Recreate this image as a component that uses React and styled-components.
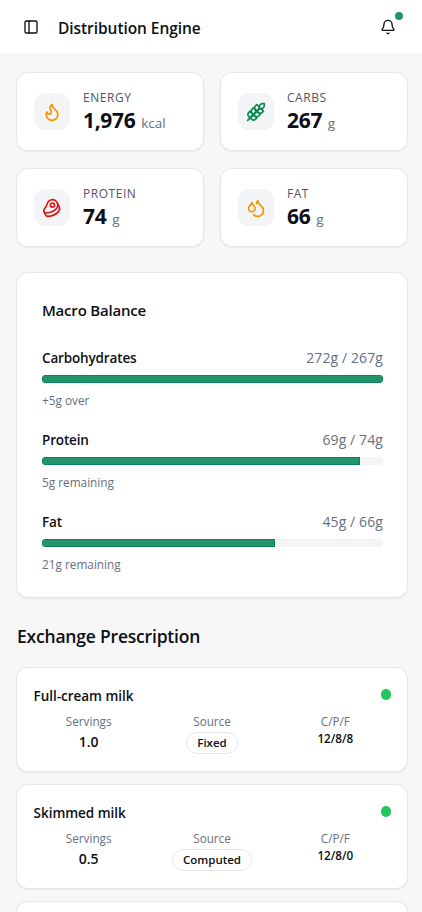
import React from "react";
import styled, { createGlobalStyle } from "styled-components";
import { PanelLeft, Bell, Flame, Wheat, Beef, Droplets } from "lucide-react";

const stats = [
  { label: "Energy", value: "1,976", unit: "kcal", color: "#f59300", icon: Flame },
  { label: "Carbs", value: "267", unit: "g", color: "#0b8a55", icon: Wheat },
  { label: "Protein", value: "74", unit: "g", color: "#dc1414", icon: Beef },
  { label: "Fat", value: "66", unit: "g", color: "#f59300", icon: Droplets },
];

const macros = [
  { name: "Carbohydrates", current: 272, target: 267 },
  { name: "Protein", current: 69, target: 74 },
  { name: "Fat", current: 45, target: 66 },
];

const exchanges = [
  { name: "Full-cream milk", servings: "1.0", source: "Fixed", cpf: "12/8/8" },
  { name: "Skimmed milk", servings: "0.5", source: "Computed", cpf: "12/8/0" },
];

const GlobalStyle = createGlobalStyle`
  * {
    box-sizing: border-box;
  }
  body {
    margin: 0;
    background-color: #f7f7f7;
    color: #0c0f16;
    font-family: "Open Sans", "Noto Sans", sans-serif;
  }
  h1, h2, h3, p {
    margin: 0;
  }
`;
const Page = styled.div`
  display: flex;
  flex-direction: column;
  height: 912px;
  overflow: hidden;
`;
const Header = styled.header`
  display: flex;
  flex-shrink: 0;
  align-items: center;
  height: 55px;
  padding: 0 26px 0 23px;
  background-color: white;
  border-bottom: 1px solid #f0f0f1;
`;
const PageTitle = styled.h1`
  flex: 1;
  margin-left: 19px;
  padding-top: 1px;
  font-size: 15.5px;
  font-weight: 600;
  line-height: 24px;
  letter-spacing: -0.06px;
`;
const BellButton = styled.div`
  position: relative;
  display: flex;
`;
const BellDot = styled.span`
  position: absolute;
  top: -7px;
  right: -7px;
  width: 8px;
  height: 8px;
  border-radius: 50%;
  background-color: #23936b;
`;
const Main = styled.main`
  display: flex;
  flex: 1;
  flex-direction: column;
  min-height: 0;
  padding: 17px 14px 0 16px;
`;
const Card = styled.div`
  flex-shrink: 0;
  background-color: white;
  border: 1px solid #e6e7ea;
  border-radius: 12px;
  box-shadow: 0 1px 2px rgba(0, 0, 0, 0.06);
`;
const StatGrid = styled.section`
  display: grid;
  grid-template-columns: 1fr 1fr;
  gap: 17px 16px;
`;
const StatCard = styled(Card)`
  display: flex;
  align-items: center;
  gap: 12.7px;
  height: 79px;
  padding: 0 17px 0 16.7px;
`;
const IconBox = styled.div`
  display: flex;
  align-items: center;
  justify-content: center;
  width: 36.6px;
  height: 36.6px;
  border-radius: 11px;
  background-color: #f3f4f6;
  color: ${(props) => props.$color};
`;
const StatLabel = styled.p`
  padding-top: 5px;
  color: #4f5666;
  font-size: 12px;
  line-height: 16px;
  letter-spacing: 0.55px;
  text-transform: uppercase;
`;
const StatValue = styled.p`
  font-size: 21px;
  font-weight: 700;
  line-height: 29px;
  letter-spacing: -0.3px;
`;
const Unit = styled.span`
  margin-left: 0.6px;
  color: #667080;
  font-size: 13.5px;
  font-weight: 400;
  letter-spacing: 0;
`;
const MacroCard = styled(Card)`
  height: 326px;
  margin-top: 25px;
  padding: 23px 24px 0 25px;
`;
const MacroTitle = styled.h2`
  font-size: 15px;
  font-weight: 600;
  line-height: 28px;
  letter-spacing: -0.2px;
`;
const MacroRow = styled.div`
  height: 82px;
  &:first-of-type {
    margin-top: 24px;
  }
`;
const MacroHead = styled.div`
  display: flex;
  justify-content: space-between;
  font-size: 13.5px;
  line-height: 20px;
`;
const MacroName = styled.span`
  font-weight: 600;
  letter-spacing: -0.15px;
`;
const MacroAmount = styled.span`
  color: #667080;
  font-size: 14px;
  letter-spacing: 0.1px;
`;
const Track = styled.div`
  height: 8px;
  margin-top: 7px;
  overflow: hidden;
  border-radius: 4px;
  background-color: #f3f4f6;
`;
const Fill = styled.div`
  height: 100%;
  border: 1px solid #0a8456;
  background-color: #23936b;
`;
const MacroNote = styled.p`
  margin-top: 9px;
  color: #667080;
  font-size: 11.8px;
  line-height: 16px;
`;
const SectionTitle = styled.h2`
  margin: 24px 0 17px;
  padding-left: 1px;
  font-size: 17.5px;
  font-weight: 600;
  line-height: 28px;
  letter-spacing: -0.2px;
`;
const ExchangeList = styled.section`
  display: flex;
  flex: 1;
  flex-direction: column;
  gap: 12px;
  min-height: 0;
`;
const ExchangeCard = styled(Card)`
  height: 105px;
  padding: 16px 16px 0;
`;
/* top edge of the card that is still below the fold */
const NextCard = styled(Card)`
  flex: 1;
  border-bottom: none;
  border-radius: 12px 12px 0 0;
`;
const ExchangeHead = styled.div`
  display: flex;
  align-items: center;
  justify-content: space-between;
  height: 24px;
`;
const ExchangeName = styled.h3`
  padding-left: 0.6px;
  font-size: 13.5px;
  font-weight: 600;
  letter-spacing: -0.03px;
`;
const Status = styled.span`
  width: 10.4px;
  height: 10.4px;
  margin: 0 -0.3px 3.4px 0;
  border-radius: 50%;
  background-color: #22c55e;
`;
const Columns = styled.div`
  display: grid;
  grid-template-columns: repeat(3, 1fr);
  gap: 12px;
  margin-top: 5px;
`;
const Column = styled.div`
  display: flex;
  flex-direction: column;
  align-items: center;
`;
const ColumnLabel = styled.span`
  color: #667080;
  font-size: 11.7px;
  line-height: 16px;
`;
const Servings = styled.span`
  margin-top: 1px;
  font-size: 14px;
  font-weight: 600;
  line-height: 24px;
`;
const Badge = styled.span`
  margin-top: 3px;
  padding: 0 10px;
  border: 1px solid #e6e7ea;
  border-radius: 11px;
  font-size: 11.5px;
  font-weight: 600;
  line-height: 20px;
`;
const Cpf = styled.span`
  margin-top: 1px;
  font-size: 11.7px;
  font-weight: 600;
  line-height: 16px;
`;

const Stat = ({ stat }) => {
  const Icon = stat.icon;
  return (
    <StatCard>
      <IconBox $color={stat.color}>
        <Icon size={20} />
      </IconBox>
      <div>
        <StatLabel>{stat.label}</StatLabel>
        <StatValue>
          {stat.value} <Unit>{stat.unit}</Unit>
        </StatValue>
      </div>
    </StatCard>
  );
};

const Macro = ({ macro }) => {
  const left = macro.target - macro.current;
  const percent = Math.min(100, (macro.current / macro.target) * 100);
  return (
    <MacroRow>
      <MacroHead>
        <MacroName>{macro.name}</MacroName>
        <MacroAmount>{`${macro.current}g / ${macro.target}g`}</MacroAmount>
      </MacroHead>
      <Track>
        <Fill style={{ width: `${percent}%` }} />
      </Track>
      <MacroNote>{left < 0 ? `+${-left}g over` : `${left}g remaining`}</MacroNote>
    </MacroRow>
  );
};

const App = () => {
  return (
    <Page>
      <GlobalStyle />
      <Header>
        <PanelLeft size={16} />
        <PageTitle>Distribution Engine</PageTitle>
        <BellButton>
          <Bell size={16} />
          <BellDot />
        </BellButton>
      </Header>
      <Main>
        <StatGrid>
          {stats.map((stat) => (
            <Stat key={stat.label} stat={stat} />
          ))}
        </StatGrid>
        <MacroCard>
          <MacroTitle>Macro Balance</MacroTitle>
          {macros.map((macro) => (
            <Macro key={macro.name} macro={macro} />
          ))}
        </MacroCard>
        <SectionTitle>Exchange Prescription</SectionTitle>
        <ExchangeList>
          {exchanges.map((item) => (
            <ExchangeCard key={item.name}>
              <ExchangeHead>
                <ExchangeName>{item.name}</ExchangeName>
                <Status />
              </ExchangeHead>
              <Columns>
                <Column>
                  <ColumnLabel>Servings</ColumnLabel>
                  <Servings>{item.servings}</Servings>
                </Column>
                <Column>
                  <ColumnLabel>Source</ColumnLabel>
                  <Badge>{item.source}</Badge>
                </Column>
                <Column>
                  <ColumnLabel>C/P/F</ColumnLabel>
                  <Cpf>{item.cpf}</Cpf>
                </Column>
              </Columns>
            </ExchangeCard>
          ))}
          <NextCard />
        </ExchangeList>
      </Main>
    </Page>
  );
};

export default App;
